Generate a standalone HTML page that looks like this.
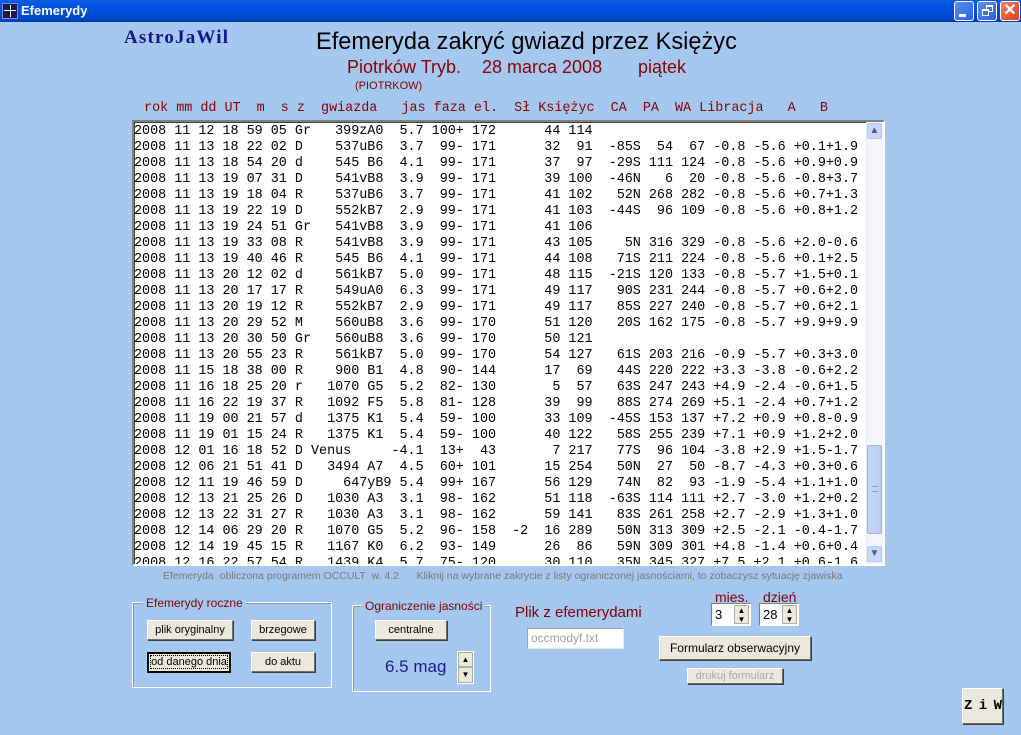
<!DOCTYPE html>
<html><head><meta charset="utf-8">
<style>
*{margin:0;padding:0;box-sizing:border-box}
body{width:1021px;height:735px;background:#a4c8ef;position:relative;overflow:hidden;font-family:"Liberation Sans",sans-serif}
.a{position:absolute;white-space:pre}
.tb{left:0;top:0;width:1021px;height:22px;background:linear-gradient(#0a5fe0,#0054e3 30%,#0049c9 80%,#003cb0);}
.tbt{left:21px;top:3px;color:#fff;font-weight:bold;font-size:13px}
.wb{top:1px;width:20px;height:20px;border:1px solid #fff;border-radius:3px;background:linear-gradient(135deg,#5a8ef5,#2a63de)}
.mono{font-family:"Liberation Mono",monospace;font-size:13.42px;line-height:16px}
.btn{position:absolute;background:#ebe9dd;border:1px solid;border-color:#fff #716f64 #716f64 #fff;box-shadow:1px 1px 0 #404040;font-size:11px;color:#000;text-align:center;white-space:pre}
.grp{position:absolute;border:1px solid #fff;box-shadow:inset 1px 1px 0 #8899aa}
.lab{position:absolute;background:#a4c8ef;color:#800000;font-size:12px;padding:0 3px}
.spin{position:absolute;background:#fff;border:1px solid;border-color:#808080 #fff #fff #808080;font-size:13px}
.arr{position:absolute;background:#ebe9dd;border:1px solid #b0ae9f}
</style></head><body>
<div class="a tb"></div>
<div class="a" style="left:2px;top:3px;width:16px;height:16px;background:#1a1a50;border:1px solid #8888cc"><div style="position:absolute;left:7px;top:1px;width:1px;height:12px;background:#fff"></div><div style="position:absolute;left:1px;top:6px;width:12px;height:1px;background:#fff"></div></div>
<div class="a tbt">Efemerydy</div>
<div class="a wb" style="left:954px"><div style="position:absolute;left:4px;top:12px;width:7px;height:3px;background:#fff"></div></div>
<div class="a wb" style="left:977px"><div style="position:absolute;left:8px;top:3px;width:7px;height:7px;border:2px solid #fff;border-width:2px 1px 1px 1px"></div><div style="position:absolute;left:4px;top:7px;width:7px;height:7px;border:1px solid #fff;border-top-width:2px;background:#3a70e5"></div></div>
<div class="a wb" style="left:1000px;background:linear-gradient(135deg,#f08060,#d84020);color:#fff;font-size:16px;font-weight:bold;text-align:center;line-height:18px">✕</div>

<div class="a" style="left:124px;top:27px;font-family:'Liberation Serif',serif;font-weight:bold;font-size:19px;letter-spacing:1.2px;color:#14148a">AstroJaWil</div>
<div class="a" style="left:316px;top:29px;font-size:23.6px;color:#000">Efemeryda zakryć gwiazd przez Księżyc</div>
<div class="a" style="left:347px;top:57px;font-size:18px;color:#8b0000">Piotrków Tryb.</div>
<div class="a" style="left:482px;top:57px;font-size:18px;color:#8b0000">28 marca 2008</div>
<div class="a" style="left:638px;top:57px;font-size:18px;color:#8b0000">piątek</div>
<div class="a" style="left:355px;top:80px;font-size:11px;color:#800000">(PIOTRKOW)</div>

<div class="a mono" style="left:136px;top:101px;color:#8b0000;font-size:13.42px"> rok mm dd UT  m  s z  gwiazda   jas faza el.  Sł Księżyc  CA  PA  WA Libracja   A   B</div>

<div class="a" style="left:132px;top:120px;width:753px;height:446px;background:#fff;border:2px solid;border-color:#808080 #fff #fff #808080;box-shadow:inset 1px 1px 0 #404040;overflow:hidden">
<div class="a mono" style="left:0px;top:2px;color:#000">2008 11 12 18 59 05 Gr   399zA0  5.7 100+ 172      44 114
2008 11 13 18 22 02 D    537uB6  3.7  99- 171      32  91  -85S  54  67 -0.8 -5.6 +0.1+1.9
2008 11 13 18 54 20 d    545 B6  4.1  99- 171      37  97  -29S 111 124 -0.8 -5.6 +0.9+0.9
2008 11 13 19 07 31 D    541vB8  3.9  99- 171      39 100  -46N   6  20 -0.8 -5.6 -0.8+3.7
2008 11 13 19 18 04 R    537uB6  3.7  99- 171      41 102   52N 268 282 -0.8 -5.6 +0.7+1.3
2008 11 13 19 22 19 D    552kB7  2.9  99- 171      41 103  -44S  96 109 -0.8 -5.6 +0.8+1.2
2008 11 13 19 24 51 Gr   541vB8  3.9  99- 171      41 106
2008 11 13 19 33 08 R    541vB8  3.9  99- 171      43 105    5N 316 329 -0.8 -5.6 +2.0-0.6
2008 11 13 19 40 46 R    545 B6  4.1  99- 171      44 108   71S 211 224 -0.8 -5.6 +0.1+2.5
2008 11 13 20 12 02 d    561kB7  5.0  99- 171      48 115  -21S 120 133 -0.8 -5.7 +1.5+0.1
2008 11 13 20 17 17 R    549uA0  6.3  99- 171      49 117   90S 231 244 -0.8 -5.7 +0.6+2.0
2008 11 13 20 19 12 R    552kB7  2.9  99- 171      49 117   85S 227 240 -0.8 -5.7 +0.6+2.1
2008 11 13 20 29 52 M    560uB8  3.6  99- 170      51 120   20S 162 175 -0.8 -5.7 +9.9+9.9
2008 11 13 20 30 50 Gr   560uB8  3.6  99- 170      50 121
2008 11 13 20 55 23 R    561kB7  5.0  99- 170      54 127   61S 203 216 -0.9 -5.7 +0.3+3.0
2008 11 15 18 38 00 R    900 B1  4.8  90- 144      17  69   44S 220 222 +3.3 -3.8 -0.6+2.2
2008 11 16 18 25 20 r   1070 G5  5.2  82- 130       5  57   63S 247 243 +4.9 -2.4 -0.6+1.5
2008 11 16 22 19 37 R   1092 F5  5.8  81- 128      39  99   88S 274 269 +5.1 -2.4 +0.7+1.2
2008 11 19 00 21 57 d   1375 K1  5.4  59- 100      33 109  -45S 153 137 +7.2 +0.9 +0.8-0.9
2008 11 19 01 15 24 R   1375 K1  5.4  59- 100      40 122   58S 255 239 +7.1 +0.9 +1.2+2.0
2008 12 01 16 18 52 D Venus     -4.1  13+  43       7 217   77S  96 104 -3.8 +2.9 +1.5-1.7
2008 12 06 21 51 41 D   3494 A7  4.5  60+ 101      15 254   50N  27  50 -8.7 -4.3 +0.3+0.6
2008 12 11 19 46 59 D     647yB9 5.4  99+ 167      56 129   74N  82  93 -1.9 -5.4 +1.1+1.0
2008 12 13 21 25 26 D   1030 A3  3.1  98- 162      51 118  -63S 114 111 +2.7 -3.0 +1.2+0.2
2008 12 13 22 31 27 R   1030 A3  3.1  98- 162      59 141   83S 261 258 +2.7 -2.9 +1.3+1.0
2008 12 14 06 29 20 R   1070 G5  5.2  96- 158  -2  16 289   50N 313 309 +2.5 -2.1 -0.4-1.7
2008 12 14 19 45 15 R   1167 K0  6.2  93- 149      26  86   59N 309 301 +4.8 -1.4 +0.6+0.4
2008 12 16 22 57 54 R   1439 K4  5.7  75- 120      30 110   35N 345 327 +7.5 +2.1 +0.6-1.6</div>
<div class="a" style="left:732px;top:0;width:17px;height:442px;background:#f3f5fb;border-left:1px solid #e8ecf5"></div>
<div class="a" style="left:733px;top:1px;width:15px;height:16px;background:#c8d9f8;border:1px solid #b5c9f0;border-radius:2px;color:#4d6185;font-size:10px;text-align:center;line-height:14px">▲</div>
<div class="a" style="left:733px;top:323px;width:15px;height:89px;background:linear-gradient(90deg,#c6d7f7,#b8cdf5);border:1px solid #9bb3e4;border-radius:2px"><div style="position:absolute;left:4px;top:40px;width:6px;height:6px;border-top:1px solid #8aa4d8;border-bottom:1px solid #8aa4d8"></div></div>
<div class="a" style="left:733px;top:424px;width:15px;height:16px;background:#c8d9f8;border:1px solid #b5c9f0;border-radius:2px;color:#4d6185;font-size:10px;text-align:center;line-height:14px">▼</div>
</div>

<div class="a" style="left:163px;top:570px;font-size:10.5px;color:#7a7a7a">Efemeryda  obliczona programem OCCULT  w. 4.2      Kliknij na wybrane zakrycie z listy ograniczonej jasnościami, to zobaczysz sytuację zjawiska</div>

<div class="grp" style="left:132px;top:602px;width:200px;height:86px"></div>
<div class="lab" style="left:143px;top:596px">Efemerydy roczne</div>
<div class="btn" style="left:147px;top:620px;width:86px;height:20px;line-height:18px">plik oryginalny</div>
<div class="btn" style="left:251px;top:620px;width:64px;height:20px;line-height:18px">brzegowe</div>
<div class="btn" style="left:147px;top:652px;width:84px;height:21px;line-height:17px;border:2px solid #000;box-shadow:none"><span style="outline:1px dotted #000">od danego dnia</span></div>
<div class="btn" style="left:251px;top:652px;width:64px;height:20px;line-height:18px">do aktu</div>

<div class="grp" style="left:352px;top:605px;width:139px;height:87px"></div>
<div class="lab" style="left:362px;top:599px">Ograniczenie jasności</div>
<div class="btn" style="left:375px;top:620px;width:72px;height:20px;line-height:18px">centralne</div>
<div class="a" style="left:385px;top:657px;font-size:17px;color:#1a1a8c">6.5 mag</div>
<div class="a" style="left:457px;top:651px;width:17px;height:33px;background:#fff;border:1px solid #fff"></div>
<div class="arr" style="left:458px;top:652px;width:15px;height:15px;font-size:8px;text-align:center;line-height:13px">▲</div>
<div class="arr" style="left:458px;top:667px;width:15px;height:16px;font-size:8px;text-align:center;line-height:14px">▼</div>

<div class="a" style="left:515px;top:604px;font-size:15px;color:#800000">Plik z efemerydami</div>
<div class="a" style="left:527px;top:628px;width:97px;height:21px;background:#fff;border:1px solid;border-color:#a0a0a0 #e8e8e8 #e8e8e8 #a0a0a0;color:#a0a0a0;font-size:12px;padding:2px 3px">occmodyf.txt</div>

<div class="a" style="left:715px;top:589px;font-size:14px;color:#800000">mies.</div>
<div class="a" style="left:763px;top:589px;font-size:14px;color:#800000">dzień</div>
<div class="spin" style="left:711px;top:603px;width:40px;height:23px;padding:3px 0 0 3px">3</div>
<div class="arr" style="left:734px;top:605px;width:15px;height:19px;font-size:8px;text-align:center;line-height:9px">▲<br>▼</div>
<div class="spin" style="left:759px;top:603px;width:40px;height:23px;padding:3px 0 0 3px">28</div>
<div class="arr" style="left:782px;top:605px;width:15px;height:19px;font-size:8px;text-align:center;line-height:9px">▲<br>▼</div>

<div class="btn" style="left:659px;top:636px;width:152px;height:24px;line-height:22px;font-size:12px">Formularz obserwacyjny</div>
<div class="btn" style="left:687px;top:668px;width:96px;height:16px;line-height:14px;color:#a8a8a0">drukuj formularz</div>
<div class="btn" style="left:962px;top:688px;width:41px;height:36px;line-height:34px;font-size:14px;font-weight:bold;font-family:'Liberation Mono',monospace;letter-spacing:-1px">Z i W</div>
</body></html>
